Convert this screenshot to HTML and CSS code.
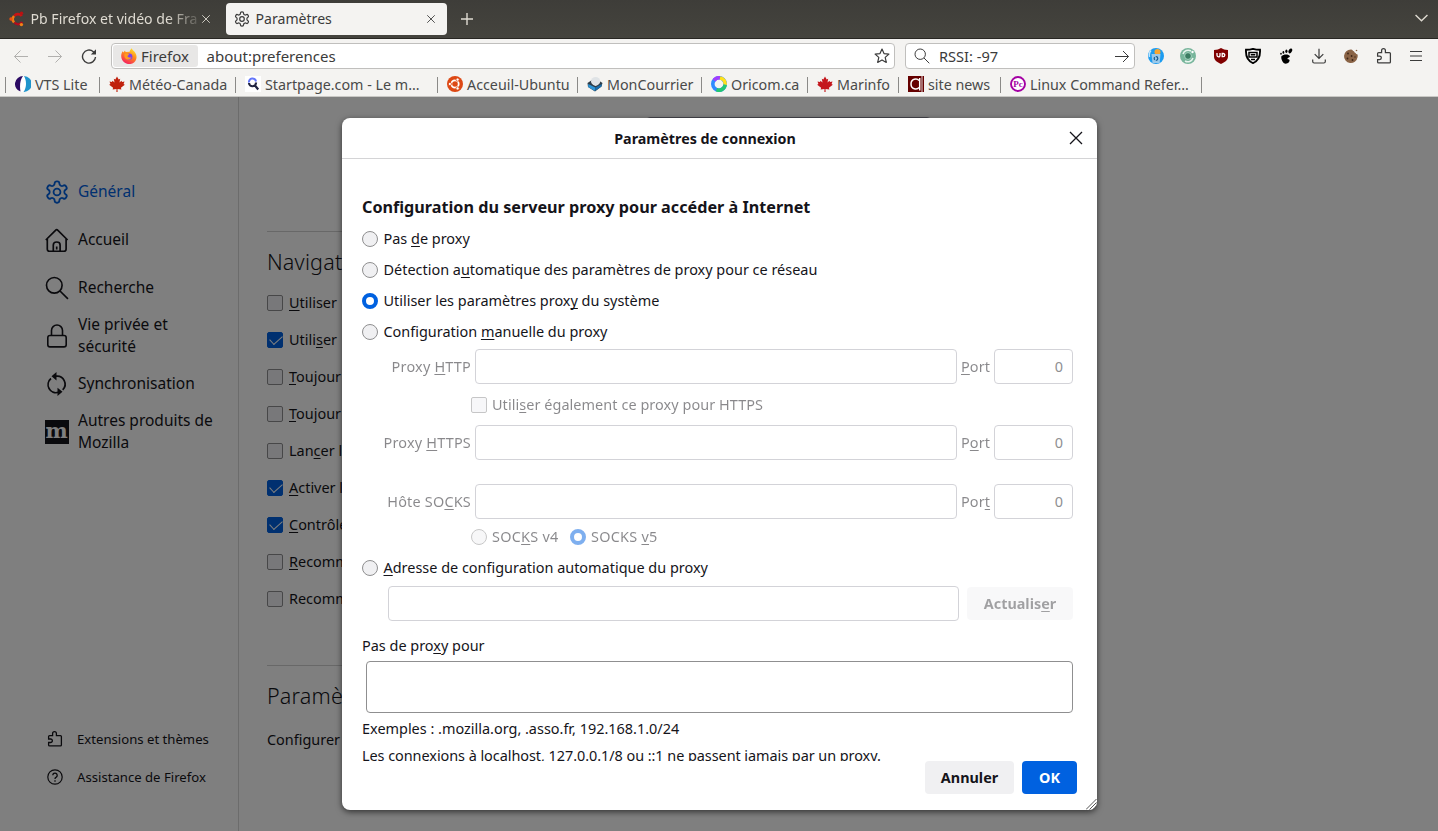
FILE: index.html
```html
<!DOCTYPE html>
<html lang="fr">

<head>
  <meta charset="UTF-8" />
  <title>Paramètres</title>
  <link rel="stylesheet" href="styles.css">
</head>

<body>

  <svg class="defs" width="0" height="0">
    <symbol id="gear" viewBox="0.8 0.8 22.4 22.4">
      <path d="M12.22 2h-.44a2 2 0 0 0-2 2v.18a2 2 0 0 1-1 1.73l-.43.25a2 2 0 0 1-2 0l-.15-.08a2 2 0 0 0-2.73.73l-.22.38a2 2 0 0 0 .73 2.73l.15.1a2 2 0 0 1 1 1.72v.51a2 2 0 0 1-1 1.74l-.15.09a2 2 0 0 0-.73 2.73l.22.38a2 2 0 0 0 2.73.73l.15-.08a2 2 0 0 1 2 0l.43.25a2 2 0 0 1 1 1.73V20a2 2 0 0 0 2 2h.44a2 2 0 0 0 2-2v-.18a2 2 0 0 1 1-1.73l.43-.25a2 2 0 0 1 2 0l.15.08a2 2 0 0 0 2.73-.73l.22-.39a2 2 0 0 0-.73-2.73l-.15-.08a2 2 0 0 1-1-1.74v-.5a2 2 0 0 1 1-1.74l.15-.09a2 2 0 0 0 .73-2.73l-.22-.38a2 2 0 0 0-2.73-.73l-.15.08a2 2 0 0 1-2 0l-.43-.25a2 2 0 0 1-1-1.73V4a2 2 0 0 0-2-2z" />
      <circle cx="12" cy="12" r="3.2" />
    </symbol>
    <symbol id="puzzle" viewBox="0 0 16 16">
      <path d="M1.6 8V5.6q0-1 1-1H5.6V2.6a1.9 1.9 0 0 1 3.8 0V4.6h4q1 0 1 1v8.3q0 1-1 1H2.6q-1 0-1-1v-2.4h2a1.75 1.75 0 0 0 0-3.5z" />
    </symbol>
    <symbol id="lens" viewBox="0 0 16 16">
      <circle cx="6.2" cy="6.2" r="5.2" />
      <path d="M10 10l5.3 5.3" />
    </symbol>
    <symbol id="close" viewBox="0 0 16 16">
      <path d="M2 2l12 12M14 2L2 14" />
    </symbol>
    <symbol id="ubuntu" viewBox="0 0 16 16">
      <circle cx="8" cy="8" r="8" fill="#dd4814" stroke="none" />
      <circle cx="8" cy="8" r="3.7" fill="none" stroke="#fff" stroke-width="1.8" />
      <g fill="#fff" stroke="#dd4814" stroke-width=".8">
        <circle cx="2.9" cy="8" r="1.6" />
        <circle cx="10.6" cy="3.6" r="1.6" />
        <circle cx="10.6" cy="12.4" r="1.6" />
      </g>
    </symbol>
    <symbol id="maple" viewBox="0 0 16 16">
      <path d="M8 .5l1.7 3 1.5-.7-.7 3.6 2-1.7.5 1.3 2.5-.4-.9 2.4 1.2.8-3.9 3 .5 1.6-3.9-.5.1 3H7.4l.1-3-3.9.5.5-1.6-3.9-3 1.2-.8L.5 5.6l2.5.4.5-1.3 2 1.7-.7-3.6 1.5.7z" stroke="none" />
    </symbol>
  </svg>

  <header class="tabbar">
    <div class="tab">
      <svg class="i16" viewBox="0 0 16 16" fill="none" stroke-width="2.6">
        <path d="M5.2 5A4.8 4.8 0 0 1 12.8 5" stroke="#c81414" />
        <path d="M13.2 11A4.8 4.8 0 0 1 5.5 11.5" stroke="#b00d1e" />
        <path d="M5 11.5A5 5 0 0 1 5 5" stroke="#f07c12" />
        <circle cx="2" cy="8" r="1.7" fill="#e94e10" />
        <circle cx="12.5" cy="2.3" r="1.7" fill="#b81212" />
        <circle cx="12.4" cy="13.6" r="1.7" fill="#f08316" />
      </svg>
      <span class="tab-title fade">Pb Firefox et vidéo de Fra</span>
      <svg class="tab-close icon"><use href="#close" /></svg>
    </div>
    <div class="tab active">
      <svg class="i16 icon" stroke-width="1.7"><use href="#gear" /></svg>
      <span class="tab-title">Paramètres</span>
      <svg class="tab-close icon"><use href="#close" /></svg>
    </div>
    <svg class="newtab icon" viewBox="0 0 12 12"><path d="M6 0v12M0 6h12" /></svg>
    <svg class="alltabs icon" viewBox="0 0 12 7"><path d="M.5 .8L6 6l5.5-5.2" /></svg>
  </header>

  <nav class="toolbar">
    <svg class="i16 icon off" viewBox="0 0 16 16"><path d="M15 8.5H1.5M7.500 2.500l-6 6 6 6" /></svg>
    <svg class="i16 icon off fwd" viewBox="0 0 16 16"><path d="M1 8.500h13.500M8.500 2.500l6 6-6 6" /></svg>
    <svg class="i16 icon reload" viewBox="0 0 16 16"><path d="M14.500 9a6.500 6.500 0 1 1-2.200-5.300l1.700 1.700" stroke-width="1.400" /><path d="M15 1.300v5.200H9.800z" fill="currentColor" stroke="none" /></svg>

    <div class="urlbar">
      <div class="identity">
        <svg class="i16" viewBox="0 0 16 16">
          <defs>
            <linearGradient id="ff" x1=".8" y1="0" x2=".3" y2="1">
              <stop offset="0" stop-color="#ffe82e" />
              <stop offset=".45" stop-color="#ff8a1c" />
              <stop offset="1" stop-color="#f51c63" />
            </linearGradient>
          </defs>
          <path d="M1.600 3.200l.8 1.300L4 2.600l.6 1.500 4-.4C9 2 9.800 1 10.800.2c.3 1.700 2.300 2.600 3.600 4.800C16 7.800 15.900 10.500 14.400 13A7.900 7.900 0 0 1 1.200 12C-.5 8.500.2 5.500 1.600 3.200z" fill="url(#ff)" />
          <circle cx="8.200" cy="8.600" r="3.200" fill="#7b3ff2" />
          <path d="M3.500 6c2-1 3.500-.2 4.700.5L6.500 8c.2 1.500 2.500 2 4 1-.8 2.500-3.500 3.300-5.500 2C3.500 10 3 8 3.500 6z" fill="#ff9a1f" />
        </svg>
        <span>Firefox</span>
      </div>
      <span class="url">about:preferences</span>
      <svg class="i16 icon star" viewBox="0 0 16 16"><path d="M8 1.100l2 4.500 4.900.5-3.700 3.300 1.100 5L8 11.900l-4.300 2.500 1.100-5L1.100 6.100 6 5.600z" stroke-linejoin="round" stroke-width="1.200" /></svg>
    </div>

    <div class="searchbar">
      <svg class="i16 icon"><use href="#lens" /></svg>
      <span>RSSI: -97</span>
      <svg class="i16 icon go" viewBox="0 0 16 16"><path d="M1 8.500h13.500M9 3l5.500 5.500L9 14" /></svg>
    </div>

    <div class="extensions">
      <svg class="i16" viewBox="0 0 16 16">
        <circle cx="8" cy="8" r="8" fill="#1c9cf0" />
        <path d="M3 2.500C1.500 4 1 6.500 1.500 9" fill="none" stroke="#bfe6ff" stroke-width="1.500" />
        <circle cx="9.500" cy="4" r="3" fill="#f7a531" />
        <path d="M3.500 6h9l-.8 9H4.500z" fill="#9bc9ea" />
        <circle cx="8" cy="10.500" r="1.800" fill="none" stroke="#14598d" stroke-width="1.200" stroke-dasharray="2.700 1" />
      </svg>
      <svg class="i16" viewBox="0 0 16 16">
        <circle cx="8" cy="8" r="8" fill="#77b59b" />
        <path d="M3 6a5.500 5.500 0 0 1 8-3M13 10a5.500 5.500 0 0 1-8 3" fill="none" stroke="#e8f4ee" stroke-width="1.600" />
        <circle cx="8" cy="8" r="3.400" fill="#3c7c62" stroke="#a9d5c2" />
        <circle cx="12.500" cy="4" r="1.200" fill="#fff" />
      </svg>
      <svg class="i16" viewBox="0 0 16 16">
        <path d="M8 0c2 1.300 4 2 7 2v6.500c0 3.500-3 5.800-7 7.500-4-1.700-7-4-7-7.500V2c3 0 5-.7 7-2z" fill="#800000" />
        <path d="M4 5v2.300q0 1.500 1.500 1.500T7 7.300V5M9.200 5.500v3.200h1a1.600 1.600 0 0 0 0-3.200z" fill="none" stroke="#fff" stroke-width="1.300" />
      </svg>
      <svg class="i16" viewBox="0 0 16 16">
        <path d="M8 .9c2 .6 4 .9 7 .9 .4 6.500-1.500 11-7 13.300C2.500 12.800.6 8.300 1 1.800c3 0 5-.3 7-.9z" fill="#fff" stroke="#000" stroke-width="1.900" />
        <path d="M4 4.600h8v4.300H4z" fill="none" stroke="#000" stroke-width="1.500" />
        <path d="M5.700 6.700h4.600M6 11.500h4" fill="none" stroke="#000" stroke-width="1.400" />
      </svg>
      <svg class="i16" viewBox="0 0 16 16">
        <path d="M3.500 8C5.500 5.800 11 6 11.800 8c.4 1.700-2.500 1.600-2.300 2.800.1.900 1.600.2 2 1.200.5 1.500-1.500 3.700-3.700 3.700-3 0-5.300-5-4.300-7.700z" fill="#000" />
        <ellipse cx="12.300" cy="2.900" rx="1.700" ry="2.600" transform="rotate(25 12.300 2.900)" fill="#000" />
        <ellipse cx="8.400" cy="3.200" rx="1.100" ry="1.700" fill="#000" />
        <ellipse cx="5.400" cy="4.400" rx=".9" ry="1.300" fill="#000" />
        <ellipse cx="3" cy="5.800" rx=".8" ry="1" fill="#000" />
      </svg>
      <svg class="i16 icon" viewBox="0 0 16 16"><path d="M8 .8v9.500M3.700 6.200L8 10.500l4.300-4.300M1.700 11.500v2q0 1.500 1.500 1.500h9.600q1.500 0 1.500-1.500v-2" stroke-width="1.200" /></svg>
      <svg class="i16" viewBox="0 0 16 16">
        <path d="M8 1.500c1.500-.2 1.600 1.800 3 1.700.2 1.700 2 1.300 2.200 2.800 1.600 0 1.800 1 1.300 3.500A6.800 6.800 0 1 1 8 1.500z" fill="#8a6346" />
        <circle cx="13.500" cy="2.500" r=".8" fill="#8a6346" />
        <g fill="#3d2516"><circle cx="5" cy="5.500" r=".9" /><circle cx="8.600" cy="8" r=".9" /><circle cx="4.500" cy="10.500" r=".9" /><circle cx="9.500" cy="12" r=".9" /><circle cx="12" cy="9" r=".7" /></g>
      </svg>
      <svg class="i16 icon" stroke-width="1.250"><use href="#puzzle" /></svg>
      <svg class="i16 icon" viewBox="0 0 16 16"><path d="M2 3.500h12M2 8h12M2 12.500h12" stroke-width="1.200" /></svg>
    </div>
  </nav>

  <div class="bookmarks">
    <div class="bm bm-vts">
      <svg class="i16" viewBox="0 0 16 16">
        <circle cx="8" cy="8" r="8" fill="#fff" />
        <path d="M8 0A8 8 0 0 0 5.500 15.600C4.500 10 5 4 8 0z" fill="#2b0a63" />
        <path d="M9 0a8 8 0 0 1-.5 16C12 11 11.500 4 9 0z" fill="#1f94cc" />
      </svg>
      <span>VTS Lite</span>
    </div>
    <div class="bm bm-meteo"><svg class="i16" fill="#c0210d"><use href="#maple" /></svg><span>Météo-Canada</span></div>
    <div class="bm bm-start">
      <svg class="i16" viewBox="0 0 16 16">
        <path d="M0 0h16v16H0z" fill="#fff" />
        <path d="M4 6.500a3.500 3.500 0 0 1 7-1" fill="none" stroke="#6577fa" stroke-width="2" />
        <path d="M4 7a3.500 3.500 0 0 0 7-.5M10 9.500l3.200 4" fill="none" stroke="#20243f" stroke-width="2.200" />
      </svg>
      <span>Startpage.com - Le m…</span>
    </div>
    <div class="bm bm-ubuntu"><svg class="i16"><use href="#ubuntu" /></svg><span>Acceuil-Ubuntu</span></div>
    <div class="bm bm-mail">
      <svg class="i16" viewBox="0 0 16 16">
        <path d="M.5 7L8 2l7.500 5-1 3.500L8 15.500 1 11z" fill="#2e3b47" />
        <path d="M1.200 8l7.100 3.500-.5 3.500L1.200 11z" fill="#2b93d6" />
        <path d="M14.800 8l-6.500 3.500-.3 3.500 6.500-4.500z" fill="#1a6dab" />
        <path d="M4 5.500a4.600 4.600 0 0 1 9.200 0c0 2-2.500 4-4.600 4.500C6.500 9.500 4 7.500 4 5.500z" fill="#dfe3e6" />
      </svg>
      <span>MonCourrier</span>
    </div>
    <div class="bm bm-oricom">
      <svg class="i16" viewBox="0 0 16 16" fill="none" stroke-width="3.600">
        <circle cx="8" cy="8" r="6.200" stroke="#2f8bff" />
        <path d="M3 4.400A6.200 6.200 0 0 1 9 1.900" stroke="#a33cff" />
        <path d="M9 1.900A6.200 6.200 0 0 1 14.100 8.800" stroke="#ffe11a" />
        <path d="M14.100 8.800A6.200 6.200 0 0 1 5.500 13.700" stroke="#22c773" />
      </svg>
      <span>Oricom.ca</span>
    </div>
    <div class="bm bm-marinfo"><svg class="i16" fill="#c4161c"><use href="#maple" /></svg><span>Marinfo</span></div>
    <div class="bm bm-site">
      <svg class="i16" viewBox="0 0 16 16">
        <path d="M0 0h16v16H0z" fill="#650000" />
        <path d="M11 4.500C9 2 3 2.500 3 8s6 6 8 3.500M11.700 2v12.500" fill="none" stroke="#fff" stroke-width="1.500" />
        <path d="M14 0v16" stroke="#e8dada" />
      </svg>
      <span>site news</span>
    </div>
    <div class="bm bm-linux">
      <svg class="i16" viewBox="0 0 16 16">
        <circle cx="8" cy="8" r="7" fill="#fff" stroke="#a400a4" stroke-width="1.900" />
        <text x="8" y="11.300" text-anchor="middle" class="pc">Pc</text>
      </svg>
      <span>Linux Command Refer…</span>
    </div>
    <div class="bm"></div>
  </div>

  <div class="content">
    <aside class="sidebar">
      <div class="cat selected"><svg class="i24 icon" stroke-width="1.700"><use href="#gear" /></svg><span>Général</span></div>
      <div class="cat"><svg class="i24 icon" viewBox="0 0 24 24"><path d="M.8 12L10.500 2.300q1.200-1.200 2.400 0L22.600 12M2.300 11V21.300q0 2 2 2h14.800q2 0 2-2V11M8.300 23.300v-6.300q0-3 3.400-3t3.400 3v6.300M11.700 18.500v3" stroke-width="1.700" /></svg><span>Accueil</span></div>
      <div class="cat"><svg class="i24 icon" stroke-width="1.100"><use href="#lens" /></svg><span>Recherche</span></div>
      <div class="cat"><svg class="i24 icon" viewBox="0 0 24 24"><path d="M6.500 11.500V6.500a5.500 5.500 0 0 1 11 0v5M5 11.500h14q2.200 0 2.200 2.200v7q0 2.200-2.200 2.200H5q-2.200 0-2.200-2.200v-7q0-2.200 2.200-2.200z" stroke-width="1.600" /></svg><span>Vie privée et<br>sécurité</span></div>
      <div class="cat"><svg class="i24 icon" viewBox="0 0 24 24"><path d="M11 4.200a8 8 0 0 1 6.700 13.600M13.500 20.300A8 8 0 0 1 6 6.500" stroke-width="1.700" /><path d="M11.500 0v8.500L6.500 4.200zM12.500 15.700v8.300l5-4.200z" fill="currentColor" stroke="none" /></svg><span>Synchronisation</span></div>
      <div class="cat"><span class="moz">m</span><span>Autres produits de<br>Mozilla</span></div>

      <div class="side-foot">
        <div class="foot"><svg class="i16 icon" stroke-width="1.300"><use href="#puzzle" /></svg><span>Extensions et thèmes</span></div>
        <div class="foot"><svg class="i16 icon" viewBox="0 0 16 16"><circle cx="8" cy="8" r="7.200" stroke-width="1.200" /><path d="M5.800 6.300a2.200 2.200 0 1 1 3.400 1.800Q8 8.800 8 10M8 11.200v1.500" stroke-width="1.300" /></svg><span>Assistance de Firefox</span></div>
      </div>
    </aside>

    <main class="main">
      <div class="find"></div>
      <hr>
      <h2>Navigat</h2>
      <div class="opt"><i class="check"></i><span><u>U</u>tiliser</span></div>
      <div class="opt"><i class="check on"></i><span>Utili<u>s</u>er</span></div>
      <div class="opt"><i class="check"></i><span><u>T</u>oujour</span></div>
      <div class="opt"><i class="check"></i><span><u>T</u>oujour</span></div>
      <div class="opt"><i class="check"></i><span>Lan<u>c</u>er l</span></div>
      <div class="opt"><i class="check on"></i><span><u>A</u>ctiver l</span></div>
      <div class="opt"><i class="check on"></i><span><u>C</u>ontrôle</span></div>
      <div class="opt"><i class="check"></i><span><u>R</u>ecomm</span></div>
      <div class="opt"><i class="check"></i><span>Recomm</span></div>
      <hr class="hr2">
      <h2>Paramè</h2>
      <p class="net">Configurer</p>
    </main>

    <div class="overlay">
      <section class="dialog">
        <div class="dialog-title">
          <span>Paramètres de connexion</span>
          <svg class="dialog-close icon"><use href="#close" /></svg>
        </div>

        <div class="dialog-body">
          <h3>Configuration du serveur proxy pour accéder à Internet</h3>
          <div class="radio-row"><i class="radio"></i><span>Pas <u>d</u>e proxy</span></div>
          <div class="radio-row"><i class="radio"></i><span>Détection a<u>u</u>tomatique des paramètres de proxy pour ce réseau</span></div>
          <div class="radio-row"><i class="radio on"></i><span>Utiliser les paramètres prox<u>y</u> du système</span></div>
          <div class="radio-row"><i class="radio"></i><span>Configuration <u>m</u>anuelle du proxy</span></div>

          <div class="proxy-row first">
            <label>Proxy <u>H</u>TTP</label><div class="field host"></div><label class="port-label"><u>P</u>ort</label><div class="field port">0</div>
          </div>
          <div class="sub-row share"><i class="check"></i><span>Utili<u>s</u>er également ce proxy pour HTTPS</span></div>
          <div class="proxy-row">
            <label>Proxy <u>H</u>TTPS</label><div class="field host"></div><label class="port-label">P<u>o</u>rt</label><div class="field port">0</div>
          </div>
          <div class="proxy-row socks">
            <label>Hôte SO<u>C</u>KS</label><div class="field host"></div><label class="port-label">Por<u>t</u></label><div class="field port">0</div>
          </div>
          <div class="sub-row versions"><i class="radio"></i><span class="v4">SOC<u>K</u>S v4</span><i class="radio on"></i><span>SOCKS <u>v</u>5</span></div>

          <div class="radio-row auto"><i class="radio"></i><span><u>A</u>dresse de configuration automatique du proxy</span></div>
          <div class="auto-row"><div class="field"></div><button class="btn" disabled>Actualis<u>e</u>r</button></div>

          <p class="no-proxy">Pas de pro<u>x</u>y pour</p>
          <div class="area"></div>
          <p class="example">Exemples : .mozilla.org, .asso.fr, 192.168.1.0/24</p>
          <p class="localhost">Les connexions à localhost, 127.0.0.1/8 ou ::1 ne passent jamais par un proxy.</p>
        </div>

        <div class="dialog-buttons">
          <button class="btn cancel">Annuler</button>
          <button class="btn primary">OK</button>
        </div>
        <svg class="resizer" viewBox="0 0 11 11"><path d="M0 10.500L10.500 0M3.500 10.500l7-7M7 10.500l3.500-3.500" /></svg>
      </section>
    </div>
  </div>

</body>

</html>
```
FILE: styles.css
```css
* {
  box-sizing: border-box;
}

body {
  margin: 0;
  width: 1438px;
  height: 831px;
  overflow: hidden;
  display: flex;
  flex-direction: column;
  font-family: "Noto Sans", "Open Sans", sans-serif;
  font-size: 14.45px;
  color: #15141a;
  white-space: nowrap;
}

h2,
h3,
p,
hr {
  margin: 0;
}

svg {
  display: block;
  flex: none;
}

u {
  text-decoration-thickness: 1px;
  text-underline-offset: 2px;
  text-decoration-skip-ink: none;
}

.defs {
  position: absolute;
}

.icon {
  fill: none;
  stroke: currentColor;
}

.i16 {
  width: 16px;
  height: 16px;
}

.i24 {
  width: 24px;
  height: 24px;
}

/* tabs */
.tabbar {
  height: 39px;
  flex: none;
  display: flex;
  align-items: center;
  background: linear-gradient(#3e3d39, #45443e);
  border-bottom: 1px solid #282723;
  color: #dfdbd2;
}

.tab {
  width: 221px;
  height: 32px;
  padding: 0 10px 0 9px;
  display: flex;
  align-items: center;
  border-radius: 4px;
  font-size: 14.1px;
}

.tab.active {
  margin-left: 5px;
  padding: 0 11px 0 8px;
  background: #f4f3f1;
  color: #3b3b3b;
}

.tab-title {
  flex: 1;
  margin-left: 5.5px;
  padding-bottom: 2px;
  overflow: hidden;
}

.fade {
  mask-image: linear-gradient(to right, #000 80%, transparent 102%);
}

.tab-close {
  width: 10px;
  height: 10px;
  stroke-width: 1.4;
}

.newtab {
  width: 12px;
  height: 12px;
  margin-left: 14px;
  stroke-width: 1.4;
}

.alltabs {
  width: 13px;
  height: 8px;
  margin-left: auto;
  margin-right: 10px;
  margin-bottom: 3px;
  stroke-width: 1.3;
}

/* navigation */
.toolbar {
  height: 34px;
  flex: none;
  display: flex;
  align-items: center;
  padding-left: 13px;
  background: #f4f3f1;
  color: #3b3b3b;
}

.off {
  color: #b1b0ae;
}

.fwd {
  margin-left: 18px;
}

.reload {
  margin-left: 18px;
  margin-right: 14px;
}

.urlbar,
.searchbar {
  height: 26px;
  display: flex;
  align-items: center;
  background: #fff;
  border: 1px solid #c0bfbd;
  border-radius: 4px;
}

.urlbar {
  width: 784px;
  padding: 0 4px 0 1px;
  font-size: 15px;
}

.identity {
  width: 85px;
  height: 22px;
  padding-left: 8px;
  display: flex;
  align-items: center;
  gap: 4px;
  border-radius: 3px;
  background: #e8e7e6;
}

.url {
  margin-left: 8.5px;
}

.star {
  margin-left: auto;
}

.searchbar {
  width: 230px;
  margin-left: 10px;
  padding: 0 4px 0 8px;
  gap: 9px;
  font-size: 14.6px;
}

.go {
  margin-left: auto;
}

.extensions {
  display: flex;
  gap: 16.6px;
  margin-left: 12.6px;
}

/* bookmarks */
.bookmarks {
  height: 24px;
  flex: none;
  display: flex;
  align-items: center;
  padding-left: 5px;
  background: #f4f3f1;
  border-bottom: 1px solid #c9c8c5;
  color: #4a4a4a;
  font-size: 14.3px;
}

.bm {
  height: 16px;
  padding-left: 9px;
  display: flex;
  align-items: center;
  gap: 4px;
  border-left: 1px solid #8b8a88;
}

.bm svg {
  margin-top: -1px;
}

.bm-vts { width: 94px; }
.bm-meteo { width: 136px; }
.bm-start { width: 202px; }
.bm-ubuntu { width: 140px; }
.bm-mail { width: 124px; }
.bm-oricom { width: 106px; }
.bm-marinfo { width: 91px; }
.bm-site { width: 102px; }
.bm-linux { width: 201px; }

.pc {
  font: bold 9px "Liberation Serif", serif;
  fill: #a400a4;
}

/* preferences page */
.content {
  flex: 1;
  display: flex;
  position: relative;
  overflow: hidden;
  background: #fff;
}

.sidebar {
  width: 239px;
  padding: 71px 0 35px 45px;
  display: flex;
  flex-direction: column;
  border-right: 1px solid #d8d8d8;
}

.cat {
  height: 48px;
  display: flex;
  align-items: center;
  gap: 9px;
  font-size: 15.5px;
  line-height: 22px;
}

.cat span:last-child {
  padding-bottom: 2px;
}

.selected {
  color: #0061e0;
}

.moz {
  width: 24px;
  height: 24px;
  background: #15141a;
  color: #fff;
  font: bold 21px/21px "DejaVu Serif", serif;
  text-align: center;
  text-indent: -1px;
}

.side-foot {
  margin-top: auto;
}

.foot {
  height: 38px;
  padding-left: 2px;
  display: flex;
  align-items: center;
  gap: 14px;
  font-size: 13.15px;
}

.main {
  width: 664px;
  margin-left: 28px;
}

.find {
  width: 285px;
  height: 34px;
  margin: 20px 0 0 379px;
  border: 1px solid #8f8f9d;
  border-radius: 4px;
}

hr {
  border: 0;
  border-top: 1px solid #d0d0d0;
  margin-top: 80px;
}

h2 {
  margin-top: 14px;
  font-size: 21.5px;
  font-weight: 300;
  line-height: 32px;
  letter-spacing: 0.2px;
}

.opt {
  height: 37px;
  display: flex;
  align-items: center;
  gap: 6px;
}

.sub-row span,
.auto span {
  padding-bottom: 2px;
}

h2 + .opt {
  margin-top: 6px;
}

.check {
  width: 16px;
  height: 16px;
  flex: none;
  border: 1px solid #8f8f90;
  border-radius: 2px;
  background: #f0f0f4;
}

.check.on {
  background: #0061e0;
  border-color: #0061e0;
}

.check.on::after {
  content: "";
  display: block;
  width: 11px;
  height: 6px;
  margin: 2px 0 0 1.5px;
  border: solid #fff;
  border-width: 0 0 1.5px 1.5px;
  transform: rotate(-42deg);
}

.hr2 {
  margin-top: 48px;
}

.net {
  margin-top: 18px;
}

.overlay {
  position: absolute;
  inset: 0;
  background: rgba(0, 0, 0, 0.5);
  padding: 21px 0 0 342px;
}

/* connection dialog */
.dialog {
  position: relative;
  width: 755px;
  height: 692px;
  display: flex;
  flex-direction: column;
  background: #fff;
  border-radius: 8px;
  box-shadow: 0 2px 6px rgba(0, 0, 0, 0.6);
}

.dialog-title {
  height: 41px;
  flex: none;
  display: flex;
  align-items: center;
  padding-right: 13px;
  border-bottom: 1px solid #d4d4d6;
  font-weight: 700;
  font-size: 14.3px;
}

.dialog-title span {
  flex: 1;
  text-align: center;
}

.dialog-close {
  width: 16px;
  height: 16px;
  margin-bottom: 1px;
  stroke-width: 1.3;
}

.dialog-body {
  height: 602px;
  padding: 34px 20px 0;
  overflow: hidden;
}

h3 {
  height: 30px;
  font-size: 16.2px;
  line-height: 28px;
}

.radio-row {
  height: 31px;
  display: flex;
  align-items: center;
  gap: 6px;
}

.radio-row span {
  margin-left: -0.5px;
}

.radio {
  width: 16px;
  height: 16px;
  flex: none;
  border: 1px solid #8f8f90;
  border-radius: 50%;
  background: #f0f0f2;
}

.radio.on {
  border: 4px solid #0061e0;
  background: #fff;
}

.proxy-row {
  height: 35px;
  margin-top: 1px;
  padding-right: 4px;
  display: flex;
  align-items: center;
  gap: 4px;
}

.first {
  margin-top: 2px;
}

.proxy-row label {
  width: 109px;
  text-align: right;
  opacity: 0.5;
  letter-spacing: 0.2px;
}

.proxy-row .port-label {
  width: 29px;
  text-align: left;
  letter-spacing: 0.1px;
}

.field {
  height: 35px;
  border: 1px solid #d3d3d8;
  border-radius: 4px;
}

.host {
  width: 482px;
}

.port {
  width: 79px;
  padding-right: 9px;
  text-align: right;
  line-height: 33px;
  color: #8f8f92;
}

.sub-row {
  height: 41px;
  padding-left: 109px;
  display: flex;
  align-items: center;
  gap: 5px;
  opacity: 0.5;
  letter-spacing: 0.06px;
}

.share {
  height: 40px;
  padding-top: 2px;
}

.socks {
  margin-top: 24px;
}

.versions {
  height: 34px;
  padding-top: 2px;
  letter-spacing: 0.25px;
}

.v4 {
  width: 73px;
}

.auto {
  height: 30px;
}

.auto-row {
  display: flex;
  align-items: center;
  gap: 8px;
  margin: 3px 4px 0 26px;
}

.auto-row .field {
  width: 571px;
}

.btn {
  height: 33px;
  width: 106px;
  padding: 0;
  border: 0;
  border-radius: 4px;
  background: #f0f0f2;
  color: #15141a;
  font: bold 14.4px "Noto Sans", "Open Sans", sans-serif;
}

.btn:disabled {
  opacity: 0.4;
}

.no-proxy {
  height: 40px;
  line-height: 50px;
}

.area {
  height: 52px;
  margin: 0 4px;
  border: 1px solid #8f8f90;
  border-radius: 4px;
}

.example {
  height: 32px;
  line-height: 32px;
}

.localhost {
  line-height: 22px;
  letter-spacing: -0.05px;
}

.dialog-buttons {
  display: flex;
  justify-content: flex-end;
  gap: 8px;
  padding-right: 20px;
}

.cancel {
  width: 89px;
}

.primary {
  width: 55px;
  background: #0061e0;
  color: #fff;
}

.resizer {
  position: absolute;
  right: 0;
  bottom: 0;
  width: 11px;
  height: 11px;
  stroke: #555;
}
```
